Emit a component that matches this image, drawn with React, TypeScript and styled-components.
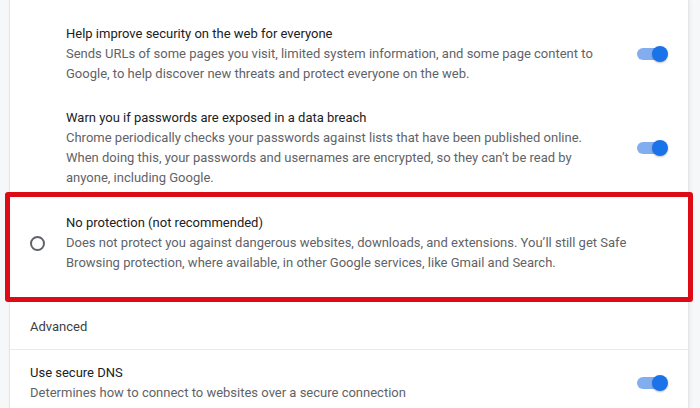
import React from "react";
import styled, { createGlobalStyle } from "styled-components";

const Global = createGlobalStyle`
  html, body { margin: 0; padding: 0; background: #f6f7f9; }
  body { font-family: Roboto, "Liberation Sans", Arial, sans-serif; }
`;

const Page = styled.div`
  display: flex;
  padding-left: 10px;
  height: 408px;
  overflow: hidden;
`;

const Card = styled.div`
  width: 678px;
  background: #fff;
  box-shadow: 0 0 0 1px #e4e6ea, 1px 0 4px rgba(60, 64, 67, 0.12);
  padding-top: 12px;
  font-size: 13px;
  line-height: 20px;
`;

const Row = styled.div<{ $inset: number; $top?: number }>`
  position: relative;
  display: flex;
  align-items: center;
  padding: ${(p) => p.$top ?? 12}px 20px 12px ${(p) => p.$inset}px;
`;

const RadioRow = styled.div`
  position: relative;
  display: flex;
  align-items: center;
  gap: 21px;
  padding: 13px 20px 13px 20px;
`;

const Texts = styled.div`
  flex: 1;
  min-width: 0;
`;

const Title = styled.div`
  color: #202124;
`;

const Desc = styled.div`
  color: #5f6368;
`;

const Header = styled.div`
  padding: 31px 20px 12px;
  color: #3c4043;
  border-bottom: 1px solid #e8eaed;
`;

const ToggleBox = styled.div`
  position: relative;
  width: 31px;
  height: 16px;
  flex: none;
  margin-left: 24px;
`;

const Track = styled.div`
  position: absolute;
  left: 0;
  top: 2px;
  width: 27px;
  height: 12px;
  border-radius: 6px;
  background: #82aef0;
`;

const Knob = styled.div`
  position: absolute;
  right: 0;
  top: 0;
  width: 16px;
  height: 16px;
  border-radius: 50%;
  background: #1a73e8;
  box-shadow: 0 1px 2px rgba(0, 0, 0, 0.25);
`;

const Radio = styled.div`
  width: 15px;
  height: 15px;
  box-sizing: border-box;
  border: 2px solid #5f6368;
  border-radius: 50%;
  flex: none;
`;

const Highlight = styled.div`
  position: absolute;
  left: -5px;
  right: -5px;
  top: -8px;
  bottom: -16px;
  border: 5px solid #dd0b16;
  border-radius: 3px;
  pointer-events: none;
`;

const Toggle = () => (
  <ToggleBox>
    <Track />
    <Knob />
  </ToggleBox>
);

export default function App() {
  return (
    <>
      <Global />
      <Page>
        <Card>
          <Row $inset={56}>
            <Texts>
              <Title>Help improve security on the web for everyone</Title>
              <Desc>
                Sends URLs of some pages you visit, limited system information, and some page content to
                <br />
                Google, to help discover new threats and protect everyone on the web.
              </Desc>
            </Texts>
            <Toggle />
          </Row>
          <Row $inset={56}>
            <Texts>
              <Title>Warn you if passwords are exposed in a data breach</Title>
              <Desc>
                Chrome periodically checks your passwords against lists that have been published online.
                <br />
                When doing this, your passwords and usernames are encrypted, so they can’t be read by
                <br />
                anyone, including Google.
              </Desc>
            </Texts>
            <Toggle />
          </Row>
          <RadioRow>
            <Radio />
            <Texts>
              <Title>No protection (not recommended)</Title>
              <Desc>
                Does not protect you against dangerous websites, downloads, and extensions. You’ll still get Safe
                <br />
                Browsing protection, where available, in other Google services, like Gmail and Search.
              </Desc>
            </Texts>
            <Highlight />
          </RadioRow>
          <Header>Advanced</Header>
          <Row $inset={20} $top={13}>
            <Texts>
              <Title>Use secure DNS</Title>
              <Desc>Determines how to connect to websites over a secure connection</Desc>
            </Texts>
            <Toggle />
          </Row>
        </Card>
      </Page>
    </>
  );
}
